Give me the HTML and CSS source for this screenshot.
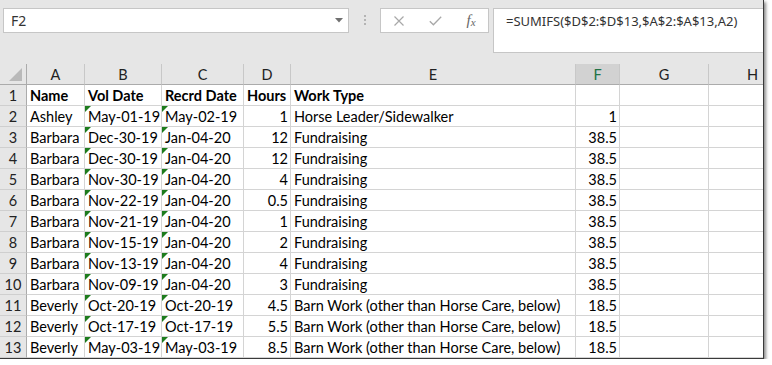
FILE: index.html
```html
<!DOCTYPE html>
<html lang="en">
<head>
  <meta charset="UTF-8" />
  <title>Volunteer Hours</title>
  <link rel="stylesheet" href="styles.css">
</head>
<body>
  <div class="window">
    <!-- Name box + formula bar -->
    <div class="formula-bar">
      <div class="name-box">
        <span>F2</span>
        <svg class="drop" width="8" height="5" viewBox="0 0 8 5"><path d="M0 0H8L4 4.5Z" fill="#707070"/></svg>
      </div>
      <div class="grip"><i></i><i></i><i></i></div>
      <div class="fbtns">
        <span><svg width="10" height="10" viewBox="0 0 10 10"><path d="M0.5 0.5L9.5 9.5M9.5 0.5L0.5 9.5" stroke="#a8a8a8" stroke-width="1.2"/></svg></span>
        <span><svg width="13" height="10" viewBox="0 0 13 10"><path d="M0.8 5.2L4.4 8.8L12.2 0.8" fill="none" stroke="#a8a8a8" stroke-width="1.3"/></svg></span>
        <span class="fx">f<small>x</small></span>
      </div>
      <div class="formula">=SUMIFS($D$2:$D$13,$A$2:$A$13,A2)</div>
    </div>

    <!-- Sheet -->
    <div class="sheet">
      <div class="row head">
        <div class="corner"><svg width="14" height="14" viewBox="0 0 14 14"><path d="M13 0V13H0Z" fill="#b9b9b9"/></svg></div>
        <div>A</div><div>B</div><div>C</div><div>D</div><div>E</div>
        <div class="sel">F</div><div>G</div><div>H</div>
      </div>

      <div class="row">
        <div class="rn">1</div>
        <div class="c b">Name</div><div class="c b">Vol Date</div><div class="c b">Recrd Date</div>
        <div class="c b">Hours</div><div class="c b">Work Type</div><div class="c"></div><div class="c"></div><div class="c"></div>
      </div>
      <div class="row">
        <div class="rn">2</div>
        <div class="c">Ashley</div><div class="c t">May-01-19</div><div class="c t">May-02-19</div>
        <div class="c n">1</div><div class="c">Horse Leader/Sidewalker</div><div class="c n">1</div><div class="c"></div><div class="c"></div>
      </div>
      <div class="row">
        <div class="rn">3</div>
        <div class="c">Barbara</div><div class="c t">Dec-30-19</div><div class="c t">Jan-04-20</div>
        <div class="c n">12</div><div class="c">Fundraising</div><div class="c n">38.5</div><div class="c"></div><div class="c"></div>
      </div>
      <div class="row">
        <div class="rn">4</div>
        <div class="c">Barbara</div><div class="c t">Dec-30-19</div><div class="c t">Jan-04-20</div>
        <div class="c n">12</div><div class="c">Fundraising</div><div class="c n">38.5</div><div class="c"></div><div class="c"></div>
      </div>
      <div class="row">
        <div class="rn">5</div>
        <div class="c">Barbara</div><div class="c t">Nov-30-19</div><div class="c t">Jan-04-20</div>
        <div class="c n">4</div><div class="c">Fundraising</div><div class="c n">38.5</div><div class="c"></div><div class="c"></div>
      </div>
      <div class="row">
        <div class="rn">6</div>
        <div class="c">Barbara</div><div class="c t">Nov-22-19</div><div class="c t">Jan-04-20</div>
        <div class="c n">0.5</div><div class="c">Fundraising</div><div class="c n">38.5</div><div class="c"></div><div class="c"></div>
      </div>
      <div class="row">
        <div class="rn">7</div>
        <div class="c">Barbara</div><div class="c t">Nov-21-19</div><div class="c t">Jan-04-20</div>
        <div class="c n">1</div><div class="c">Fundraising</div><div class="c n">38.5</div><div class="c"></div><div class="c"></div>
      </div>
      <div class="row">
        <div class="rn">8</div>
        <div class="c">Barbara</div><div class="c t">Nov-15-19</div><div class="c t">Jan-04-20</div>
        <div class="c n">2</div><div class="c">Fundraising</div><div class="c n">38.5</div><div class="c"></div><div class="c"></div>
      </div>
      <div class="row">
        <div class="rn">9</div>
        <div class="c">Barbara</div><div class="c t">Nov-13-19</div><div class="c t">Jan-04-20</div>
        <div class="c n">4</div><div class="c">Fundraising</div><div class="c n">38.5</div><div class="c"></div><div class="c"></div>
      </div>
      <div class="row">
        <div class="rn">10</div>
        <div class="c">Barbara</div><div class="c t">Nov-09-19</div><div class="c t">Jan-04-20</div>
        <div class="c n">3</div><div class="c">Fundraising</div><div class="c n">38.5</div><div class="c"></div><div class="c"></div>
      </div>
      <div class="row">
        <div class="rn">11</div>
        <div class="c">Beverly</div><div class="c t">Oct-20-19</div><div class="c t">Oct-20-19</div>
        <div class="c n">4.5</div><div class="c">Barn Work (other than Horse Care, below)</div><div class="c n">18.5</div><div class="c"></div><div class="c"></div>
      </div>
      <div class="row">
        <div class="rn">12</div>
        <div class="c">Beverly</div><div class="c t">Oct-17-19</div><div class="c t">Oct-17-19</div>
        <div class="c n">5.5</div><div class="c">Barn Work (other than Horse Care, below)</div><div class="c n">18.5</div><div class="c"></div><div class="c"></div>
      </div>
      <div class="row">
        <div class="rn">13</div>
        <div class="c">Beverly</div><div class="c t">May-03-19</div><div class="c t">May-03-19</div>
        <div class="c n">8.5</div><div class="c">Barn Work (other than Horse Care, below)</div><div class="c n">18.5</div><div class="c"></div><div class="c"></div>
      </div>
    </div>
  </div>
</body>
</html>
```

FILE: styles.css
```css
/* ===== General ===== */
body {
  margin: 0;
  background-color: #fff;
  font-family: Lato, "Liberation Sans", sans-serif;
  color: #000;
}
.window {
  width: 763px;
  height: 358px;
  overflow: hidden;
  background-color: #fff;
  border-right: 1px solid #3a3a3a;
  border-bottom: 1px solid #3a3a3a;
  box-shadow: 2px 2px 3px rgba(0,0,0,0.45);
}

/* ===== Formula bar ===== */
.formula-bar {
  display: flex;
  align-items: flex-start;
  height: 64px;
  padding: 8px 0 0 3px;
  box-sizing: border-box;
  background-color: #e6e6e6;
  font-family: "Noto Sans", "Open Sans", sans-serif;
  font-size: 13px;
  color: #333;
}
.name-box {
  display: flex;
  flex-shrink: 0;
  align-items: center;
  justify-content: space-between;
  width: 346px;
  height: 25px;
  padding: 0 5px 0 7px;
  box-sizing: border-box;
  background-color: #fff;
  border: 1px solid #c6c6c6;
  font-size: 14px;
}
.grip {
  display: flex;
  flex-shrink: 0;
  flex-direction: column;
  align-items: center;
  gap: 2px;
  width: 31px;
  padding-top: 7px;
}
.grip i {
  width: 2px;
  height: 2px;
  background-color: #b4b4b4;
}
.fbtns {
  display: grid;
  flex-shrink: 0;
  grid-template-columns: 36px 36px 36px;
  align-items: center;
  justify-items: center;
  width: 109px;
  height: 25px;
  box-sizing: border-box;
  background-color: #fff;
  border: 1px solid #c6c6c6;
}
.fbtns span {
  display: flex;
}
.fx {
  font-family: "Liberation Serif", serif;
  font-style: italic;
  font-size: 15px;
  color: #666;
  line-height: 1;
}
.fx small {
  font-size: 11px;
  margin-top: 4px;
}
.formula {
  flex-shrink: 0;
  width: 300px;
  height: 45px;
  margin-left: 4px;
  padding: 3px 0 0 12px;
  box-sizing: border-box;
  background-color: #fff;
  border: 1px solid #c6c6c6;
  white-space: nowrap;
}

/* ===== Sheet ===== */
.row {
  display: grid;
  grid-template-columns: 27px 58px 77px 82px 47px 285px 44px 89px 88px;
  height: 21px;
  font-size: 14.5px;
  line-height: 21px;
}
.row > div {
  box-sizing: border-box;
  height: 21px;
  white-space: nowrap;
}
.head > div {
  background-color: #e6e6e6;
  border-right: 1px solid #c8c8c8;
  border-bottom: 1px solid #ababab;
  text-align: center;
  color: #222;
}
.head .corner {
  display: flex;
  align-items: flex-end;
  justify-content: flex-end;
  padding: 0 3px 2px 0;
  border-right-color: #ababab;
}
.head .sel {
  background-color: #d2d2d2;
  color: #217346;
}
.rn {
  background-color: #e6e6e6;
  border-right: 1px solid #ababab;
  border-bottom: 1px solid #cfcfcf;
  text-align: center;
  color: #222;
}
.c {
  position: relative;
  padding: 0 3px;
  border-right: 1px solid #d4d4d4;
  border-bottom: 1px solid #d4d4d4;
}
.b {
  font-weight: bold;
}
.n {
  text-align: right;
  padding-right: 2px;
}
/* green "number stored as text" marker */
.t::before {
  content: "";
  position: absolute;
  top: 0;
  left: 0;
  border-top: 6px solid #1d7c1d;
  border-right: 6px solid transparent;
}
```
